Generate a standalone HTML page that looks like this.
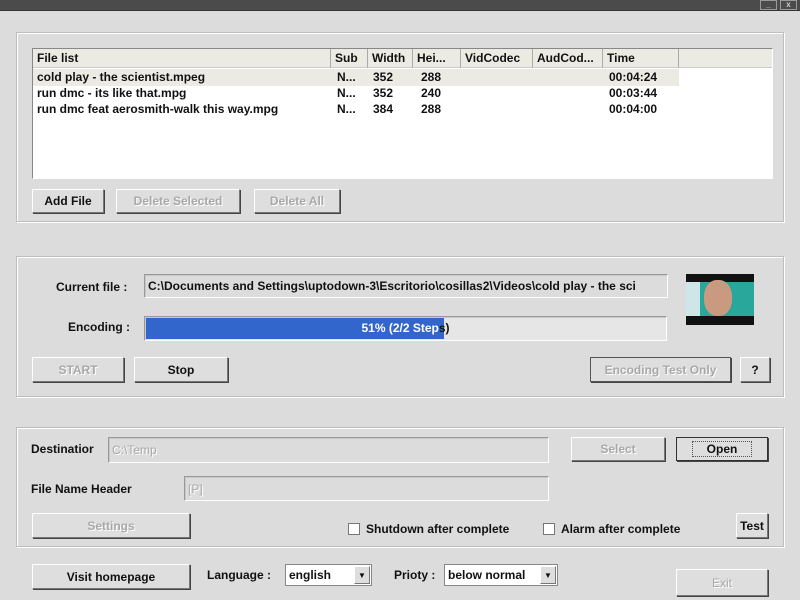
<!DOCTYPE html>
<html><head><meta charset="utf-8"><style>
*{box-sizing:border-box;margin:0;padding:0}
body{width:800px;height:600px;background:#dcdcdc;font-family:"Liberation Sans",sans-serif;font-size:12px;color:#111;position:relative;overflow:hidden;font-weight:bold}
.a{position:absolute}
.title{left:0;top:0;width:800px;height:11px;background:#4b4b4b;border-bottom:1px solid #333}
.lb{left:0;top:0;width:3px;height:600px;background:#555}
.grp{border:1px solid #bdbdbd;box-shadow:inset 1px 1px 0 #fff,1px 1px 0 #fff}
.btn{background:#dedede;border:1px solid;border-color:#fff #777 #777 #fff;box-shadow:1px 1px 0 #444;text-align:center;display:flex;align-items:center;justify-content:center}
.dis{color:#a8a8a8;text-shadow:1px 1px 0 #fff}
.tb{background:#dcdcdc;border:1px solid;border-color:#999 #fff #fff #999;box-shadow:inset 1px 1px 0 #c8c8c8;padding-left:3px;display:flex;align-items:center;white-space:nowrap;overflow:hidden}
.lv{background:#fff;border:1px solid;border-color:#888 #fff #fff #888}
.hd{position:absolute;top:0;height:19px;background:#ecebe3;border-right:1px solid #aaa;border-bottom:1px solid #ccc;padding-left:4px;line-height:19px}
.row{position:absolute;left:4px;height:16px;line-height:16px;white-space:nowrap}
.row span{position:absolute}
.sel{background:#fff;border:1px solid #888;display:flex;align-items:center;padding-left:3px}
.arr{position:absolute;right:1px;top:1px;width:16px;height:18px;background:#dedede;border:1px solid;border-color:#fff #777 #777 #fff;font-size:8px;display:flex;align-items:center;justify-content:center}
.cb{width:12px;height:12px;background:#fff;border:1px solid #777}
</style></head><body>
<div class="a title"></div>
<div class="a" style="left:760px;top:0;width:17px;height:10px;border:1px solid #999;color:#ccc;font-size:8px;text-align:center;line-height:8px">_</div>
<div class="a" style="left:780px;top:0;width:17px;height:10px;border:1px solid #999;color:#ccc;font-size:8px;text-align:center;line-height:8px">x</div>

<div class="a grp" style="left:16px;top:32px;width:768px;height:190px"></div>
<div class="a lv" style="left:32px;top:48px;width:741px;height:131px">
 <div class="hd" style="left:0;width:298px">File list</div>
 <div class="hd" style="left:298px;width:37px">Sub</div>
 <div class="hd" style="left:335px;width:45px">Width</div>
 <div class="hd" style="left:380px;width:48px">Hei...</div>
 <div class="hd" style="left:428px;width:72px">VidCodec</div>
 <div class="hd" style="left:500px;width:70px">AudCod...</div>
 <div class="hd" style="left:570px;width:76px">Time</div>
 <div class="hd" style="left:646px;width:93px;border-right:none"></div>
 <div class="a" style="left:0;top:20px;width:646px;height:17px;background:#ecebe3"></div>
 <div class="row" style="top:20px"><span style="left:0">cold play - the scientist.mpeg</span><span style="left:300px">N...</span><span style="left:336px">352</span><span style="left:384px">288</span><span style="left:572px">00:04:24</span></div>
 <div class="row" style="top:36px"><span style="left:0">run dmc - its like that.mpg</span><span style="left:300px">N...</span><span style="left:336px">352</span><span style="left:384px">240</span><span style="left:572px">00:03:44</span></div>
 <div class="row" style="top:52px"><span style="left:0">run dmc feat aerosmith-walk this way.mpg</span><span style="left:300px">N...</span><span style="left:336px">384</span><span style="left:384px">288</span><span style="left:572px">00:04:00</span></div>
</div>
<div class="a btn" style="left:32px;top:189px;width:72px;height:24px">Add File</div>
<div class="a btn dis" style="left:116px;top:189px;width:124px;height:24px">Delete Selected</div>
<div class="a btn dis" style="left:254px;top:189px;width:86px;height:24px">Delete All</div>

<div class="a grp" style="left:16px;top:256px;width:768px;height:141px"></div>
<div class="a" style="left:56px;top:280px">Current file :</div>
<div class="a tb" style="left:144px;top:274px;width:524px;height:24px">C:\Documents and Settings\uptodown-3\Escritorio\cosillas2\Videos\cold play - the sci</div>
<div class="a" style="left:686px;top:274px;width:68px;height:51px;background:#111">
 <div class="a" style="left:0;top:8px;width:68px;height:34px;background:#2aa79b"></div>
 <div class="a" style="left:0;top:8px;width:14px;height:34px;background:#cfe6e8"></div>
 <div class="a" style="left:18px;top:6px;width:28px;height:36px;background:#c99a80;border-radius:45%"></div>
</div>
<div class="a" style="left:68px;top:320px">Encoding :</div>
<div class="a tb" style="left:144px;top:316px;width:523px;height:25px;background:#e6e6e6;padding:0">
 <div class="a" style="left:1px;top:1px;width:298px;height:21px;background:#3366cc"></div>
 <div class="a" style="left:0;top:4px;width:100%;text-align:center;color:#111"><span style="color:#fff">51% (2/2 Step</span>s)</div>
</div>
<div class="a btn dis" style="left:32px;top:357px;width:92px;height:25px">START</div>
<div class="a btn" style="left:134px;top:357px;width:94px;height:25px">Stop</div>
<div class="a btn dis" style="left:590px;top:357px;width:141px;height:25px;border:1px solid #555">Encoding Test Only</div>
<div class="a btn" style="left:740px;top:357px;width:30px;height:25px">?</div>

<div class="a grp" style="left:16px;top:427px;width:768px;height:120px"></div>
<div class="a" style="left:31px;top:442px">Destinatior</div>
<div class="a tb dis" style="left:108px;top:437px;width:441px;height:26px;font-weight:normal">C:\Temp</div>
<div class="a btn dis" style="left:571px;top:437px;width:94px;height:24px">Select</div>
<div class="a btn" style="left:676px;top:437px;width:92px;height:24px;border:1px solid #333"><span style="border:1px dotted #555;padding:0 14px">Open</span></div>
<div class="a" style="left:31px;top:482px">File Name Header</div>
<div class="a tb dis" style="left:184px;top:476px;width:365px;height:25px;font-weight:normal">[P]</div>
<div class="a btn dis" style="left:32px;top:513px;width:158px;height:25px">Settings</div>
<div class="a cb" style="left:348px;top:523px"></div>
<div class="a" style="left:366px;top:522px">Shutdown after complete</div>
<div class="a cb" style="left:543px;top:523px"></div>
<div class="a" style="left:561px;top:522px">Alarm after complete</div>
<div class="a btn" style="left:736px;top:513px;width:32px;height:25px">Test</div>

<div class="a btn" style="left:32px;top:564px;width:158px;height:25px">Visit homepage</div>
<div class="a" style="left:207px;top:568px">Language :</div>
<div class="a sel" style="left:285px;top:564px;width:87px;height:22px">english<div class="arr">▼</div></div>
<div class="a" style="left:394px;top:568px">Prioty :</div>
<div class="a sel" style="left:444px;top:564px;width:114px;height:22px">below normal<div class="arr">▼</div></div>
<div class="a btn dis" style="left:676px;top:569px;width:92px;height:27px;font-weight:normal">Exit</div>
</body></html>
